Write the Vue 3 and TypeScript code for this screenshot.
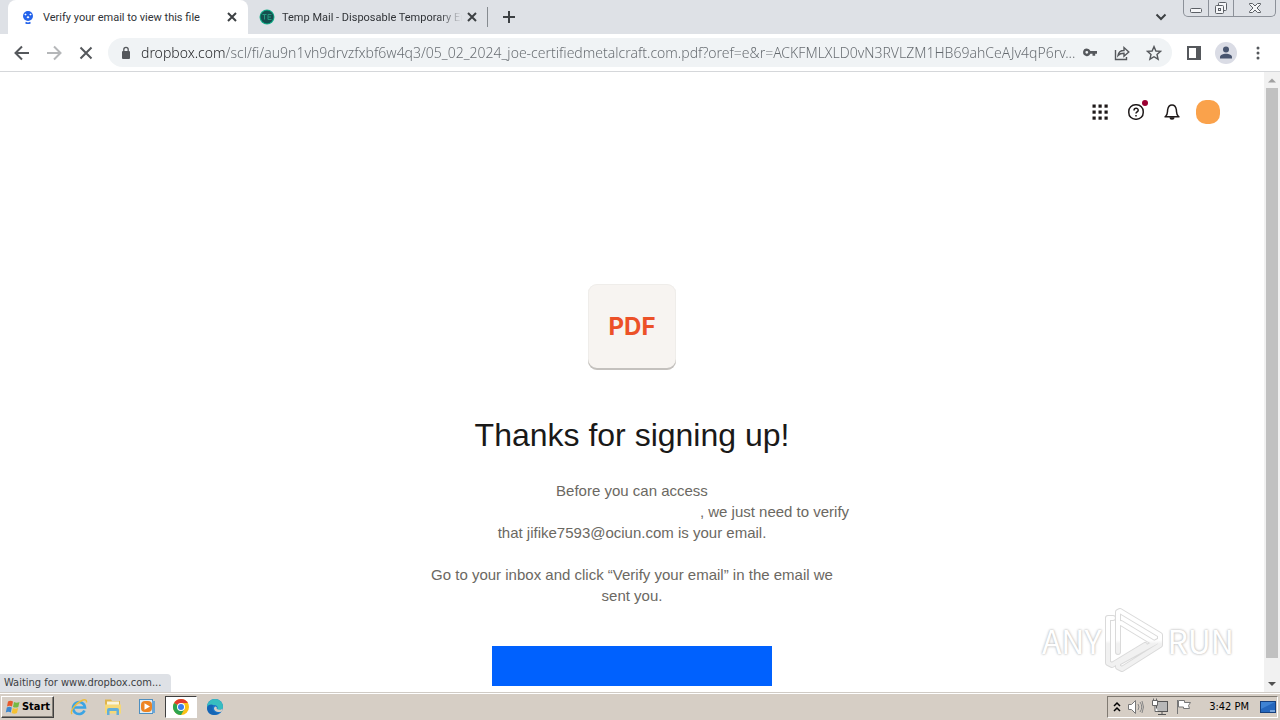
<script setup lang="ts">
import { ref } from 'vue'

const url = ref(
  'dropbox.com/scl/fi/au9n1vh9drvzfxbf6w4q3/05_02_2024_joe-certifiedmetalcraft.com.pdf?oref=e&r=ACKFMLXLD0vN3RVLZM1HB69ahCeAJv4qP6rv...'
)
const dots: number[] = [1, 7, 13]
</script>

<template>
  <div class="screen">
    <div class="tabstrip">
      <div class="tab active">
        <svg class="fav" viewBox="0 0 16 16" aria-hidden="true">
          <circle cx="8" cy="7" r="5" fill="#2463eb" />
          <path d="M5.500 4.500l1.200 1-1.200 1-1.200-1zM10.500 4.500l1.200 1-1.200 1-1.200-1zM8 7l1.500 1.200L8 9.500 6.500 8.200z" fill="#fff" />
          <path d="M5.500 13.500q2.500 1.500 5 0" fill="none" stroke="#2463eb" stroke-width="1.500" />
        </svg>
        <span class="title">Verify your email to view this file</span>
        <button class="close" aria-label="Close tab">
          <svg viewBox="0 0 10 10"><path d="M1 1l8 8M9 1L1 9" /></svg>
        </button>
      </div>
      <div class="tab">
        <svg class="fav" viewBox="0 0 16 16" aria-hidden="true">
          <circle cx="8" cy="8" r="7.500" fill="#12b08a" />
          <circle cx="8" cy="8" r="6.500" fill="#14504f" />
          <path d="M3.500 5.500h4M5.500 5.500v5M9 5.500h3.500M9 8h3M9 10.500h3.500M9 5.500v5" stroke="#279a80" fill="none" />
        </svg>
        <span class="title fade">Temp Mail - Disposable Temporary En</span>
        <button class="close" aria-label="Close tab">
          <svg viewBox="0 0 10 10"><path d="M1 1l8 8M9 1L1 9" /></svg>
        </button>
      </div>
      <i class="separator"></i>
      <button class="newtab" aria-label="New tab">
        <svg viewBox="0 0 12 12"><path d="M6 0v12M0 6h12" /></svg>
      </button>
      <button class="chevron" aria-label="Search tabs">
        <svg viewBox="0 0 12 8"><path d="M1.500 1.500L6 6l4.500-4.500" /></svg>
      </button>
      <div class="window-buttons">
        <button aria-label="Minimize">
          <svg width="14" height="14" viewBox="0 0 14 14"><rect x="1.500" y="7.500" width="11" height="4" rx="1" /></svg>
        </button>
        <button aria-label="Restore">
          <svg width="14" height="14" viewBox="0 0 14 14"><rect x="4.500" y="1.500" width="8" height="8" rx="1" /><rect x="1.500" y="4.500" width="8" height="8" rx="1" /><rect x="4.500" y="7.500" width="2" height="2" /></svg>
        </button>
        <button class="wide" aria-label="Close">
          <svg width="14" height="14" viewBox="0 0 14 14"><path d="M1.500 2.500h3L7 5l2.500-2.500h3v1L9 7l3.500 3.500v1h-3L7 9l-2.500 2.500h-3v-1L5 7 1.500 3.500z" /></svg>
        </button>
      </div>
    </div>

    <div class="toolbar">
      <button class="tool" aria-label="Back"><svg viewBox="0 0 16 16"><path d="M15 8H2M8 1.500L1.500 8 8 14.500" /></svg></button>
      <button class="tool dim" aria-label="Forward"><svg viewBox="0 0 16 16"><path d="M1 8h13M8 1.500L14.500 8 8 14.500" /></svg></button>
      <button class="tool" aria-label="Stop"><svg viewBox="0 0 16 16"><path d="M2.500 2.500l11 11M13.500 2.500l-11 11" /></svg></button>
      <div class="omnibox">
        <svg class="lock" viewBox="0 0 10 14" aria-hidden="true"><rect x="1" y="5" width="8" height="8" rx="1" fill="#55585c" /><path d="M2.800 5.500V3.600a2.200 2.200 0 0 1 4.400 0v1.900" fill="none" stroke="#55585c" stroke-width="1.300" /></svg>
        <input v-model="url" class="url" type="text" aria-label="Address" spellcheck="false" />
        <button class="tool" aria-label="Passwords">
          <svg viewBox="0 0 16 16"><path class="solid" fill-rule="evenodd" d="M4.800 3.500a3.800 3.800 0 1 0 3.600 5.200h2.100v2h2.700v-2H15V6.100H8.400A3.800 3.800 0 0 0 4.800 3.500zm0 2.400a1.400 1.400 0 1 1 0 2.800 1.400 1.400 0 0 1 0-2.800z" /></svg>
        </button>
        <button class="tool" aria-label="Share">
          <svg class="thin" viewBox="0 0 16 16"><path d="M1.500 5v9.500h11V12M4 10.500c.5-3.500 2.500-5 6-5V2.500L14.800 7 10 11.200V8.300c-2.800 0-4.500.5-6 2.200z" /></svg>
        </button>
        <button class="tool" aria-label="Bookmark">
          <svg class="thin" viewBox="0 0 16 16"><path d="M8 1.600l1.900 4.400 4.700.4-3.600 3.100 1.100 4.700L8 11.700l-4.100 2.500L5 9.500 1.400 6.400 6.100 6z" /></svg>
        </button>
      </div>
      <button class="tool" aria-label="Side panel"><svg viewBox="0 0 16 16"><rect x="2" y="2" width="12" height="12" /><path class="solid" d="M10 2h4v12h-4z" /></svg></button>
      <button class="tool profile" aria-label="Profile"><svg viewBox="0 0 22 22"><circle cx="11" cy="11" r="11" fill="#dadce5" /><circle cx="11" cy="7.500" r="3" fill="#48556f" /><path d="M5 16.500v-1.300c0-2.200 3-3.400 6-3.400s6 1.200 6 3.400v1.300z" fill="#48556f" /></svg></button>
      <button class="tool" aria-label="Menu"><svg viewBox="0 0 16 16"><circle class="solid" cx="8" cy="3" r="1.500" /><circle class="solid" cx="8" cy="8" r="1.500" /><circle class="solid" cx="8" cy="13" r="1.500" /></svg></button>
    </div>

    <div class="viewport">
      <main class="page">
        <nav class="page-nav">
          <button aria-label="Apps">
            <svg viewBox="0 0 16 16">
              <template v-for="y in dots" :key="y">
                <rect v-for="x in dots" :key="x" :x="x - 0.5" :y="y - 0.5" width="3.2" height="3.2" fill="#1e1919" />
              </template>
            </svg>
          </button>
          <button aria-label="Help">
            <svg viewBox="0 0 16 16" class="line"><rect x="0.800" y="0.800" width="14.400" height="14.400" rx="6.500" /><path d="M6 6.500C6 3.500 10.200 3.700 10.200 6.200 10.200 7.800 8 7.800 8 9.500M8 11v1.500" /></svg>
            <i class="badge"></i>
          </button>
          <button aria-label="Notifications">
            <svg viewBox="0 0 16 16" class="line"><path d="M0.500 12.700h15M1.500 12.500C4 10.500 3.200 8.500 3.700 5.500 4.200 2.500 5.800 1 8 1s3.800 1.500 4.300 4.500c.5 3-.3 5 2.200 7" /><path d="M5.500 13.300a2.500 2.500 0 0 0 5 0z" fill="#1e1919" stroke="none" /></svg>
          </button>
          <button aria-label="Account" class="account"></button>
        </nav>
        <section class="message">
          <div class="file">PDF</div>
          <h1>Thanks for signing up!</h1>
          <p>Before you can access<br /><span class="filename"></span>, we just need to verify<br />that jifike7593@ociun.com is your email.</p>
          <p>Go to your inbox and click “Verify your email” in the email we<br />sent you.</p>
          <button class="primary" aria-label="Verify email"></button>
        </section>
      </main>
      <div class="scrollbar" aria-hidden="true">
        <svg viewBox="0 0 16 16"><path d="M4 10.500l4-4 4 4z" fill="#a0a0a0" /></svg>
        <i class="thumb"></i>
        <svg class="end" viewBox="0 0 16 16"><path d="M4 6l4 4 4-4z" fill="#505050" /></svg>
      </div>
      <div class="status">Waiting for www.dropbox.com...</div>
      <div class="watermark">
        <span>ANY</span>
        <svg viewBox="0 0 60 64" aria-hidden="true">
          <defs>
            <linearGradient id="mark" x1="0" y1="0" x2="0" y2="64" gradientUnits="userSpaceOnUse">
              <stop offset="0.500" stop-color="#fff" />
              <stop offset="0.560" stop-color="#f1f1f1" />
            </linearGradient>
          </defs>
          <g fill="none" stroke-linejoin="round" stroke-linecap="round">
            <path d="M9 10H4v45l4 2 33-20M14 44V4l2-1 40 24v5M17 15l33 20M14 55v4l4 2 38-24v-5L14 55" stroke="#dadada" stroke-width="6" />
            <path d="M9 10H4v45l4 2 33-20M14 44V4l2-1 40 24v5M17 15l33 20M14 55v4l4 2 38-24v-5L14 55" stroke="url(#mark)" stroke-width="4" />
          </g>
        </svg>
        <span>RUN</span>
      </div>
    </div>

    <footer class="taskbar">
      <button class="start">
        <svg viewBox="0 0 16 16" aria-hidden="true"><path d="M3 2.500q2.500-1.500 5 0L7 7.500q-2.500-1.500-5 0z" fill="#e7592b" /><path d="M9 3q2.500 1.300 5.500 0l-1.200 5q-2.600 1.200-5.300 0z" fill="#75b943" /><path d="M1.800 8.500q2.500-1.500 5 0l-1 5q-2.500-1.500-5 0z" fill="#3d88cf" /><path d="M7.800 9q2.500 1.300 5.300 0L12 14q-2.600 1.300-5.300 0z" fill="#f5c132" /></svg>
        Start
      </button>
      <div class="launchers">
        <button aria-label="Internet Explorer">
          <svg viewBox="0 0 18 18"><path d="M14.500 12.500A6 6 0 1 1 15 9.500H4.500" fill="none" stroke="#3ba4e4" stroke-width="2.600" /><path d="M2 16C-.5 13 6 4.500 13 2q4-1 3.500 2.500" fill="none" stroke="#edbd3d" stroke-width="1.400" /></svg>
        </button>
        <button aria-label="File Explorer">
          <svg viewBox="0 0 18 18"><path d="M1 1.500h6l1 1.500h8v12H1z" fill="#dfb54d" /><path d="M3 3.500h12v4H3z" fill="#f9f4dc" /><path d="M1 6.500h16v9H1z" fill="#f5d878" /><path d="M3 17v-5q0-2 2-2h8q2 0 2 2v5h-2.500v-4h-7v4z" fill="#62aeda" /></svg>
        </button>
        <button aria-label="Media Player">
          <svg viewBox="0 0 18 18"><rect x="1.500" y="1.500" width="13" height="14" fill="#deedf8" stroke="#4e8fc0" /><path d="M14 3h3v12h-3" fill="#6ba6d6" /><rect x="3" y="3" width="11" height="11" rx="4" fill="#ed8423" /><path d="M6.500 5.200v6.600l5.500-3.300z" fill="#fff" /></svg>
        </button>
        <button aria-label="Chrome" class="pressed">
          <svg viewBox="0 0 18 18"><circle cx="9" cy="9" r="8" fill="#fbc116" /><path d="M9 9L2.070 5A8 8 0 0 1 15.930 5H9z" fill="#e33b2e" /><path d="M9 9l-6.930-4A8 8 0 0 0 9 17l3.500-6z" fill="#2da44f" /><circle cx="9" cy="9" r="4" fill="#fff" /><circle cx="9" cy="9" r="3" fill="#3b7ded" /></svg>
        </button>
        <button aria-label="Edge">
          <svg viewBox="0 0 18 18"><circle cx="9" cy="9" r="8" fill="#1976cb" /><path d="M1 9a8 8 0 0 1 16 0c0 3-3.500 3.500-6 2.500 2-3-1-5-4-4.500C4 7.300 1.500 8 1 10z" fill="#37bdc0" /><path d="M1 10C1.500 6.500 5.500 6 7.500 7.200 5 10 7 15 13 14.800 9 19 1 17 1 10z" fill="#1565b5" /><path d="M9 8.500c1.600 0 2.300 1 1.600 2.300 1.800 1.300 5 1.200 6.300-.6l-1 3c-3 2-8 .5-7.900-3.200z" fill="#d6cfc7" /></svg>
        </button>
      </div>
      <div class="tray">
        <svg class="small" viewBox="0 0 8 12" aria-hidden="true"><path d="M1 5l3-3 3 3M1 10l3-3 3 3" fill="none" stroke="#000" stroke-width="1.500" /></svg>
        <svg viewBox="0 0 18 18" aria-hidden="true"><path d="M1.500 6.500h3l4-4v13l-4-4h-3z" fill="#fff" stroke="#777" /><path d="M11 6q2 3 0 6M13 4q3.500 5 0 10M15 3q3 6 0 12" fill="none" stroke="#858585" /></svg>
        <svg viewBox="0 0 18 18" aria-hidden="true"><rect x="5.500" y="3.500" width="11" height="10" fill="#b8b8b8" stroke="#555" /><path d="M7 16.500h8M11 14v2" stroke="#555" /><path d="M1.500 2.500h5v5h-5zM4 7.500v6h3M2.500 0.500v2M5.500 0.500v2" fill="#fff" stroke="#666" /></svg>
        <svg viewBox="0 0 18 18" aria-hidden="true"><path d="M2.500 2v14" stroke="#777" stroke-width="1" /><path d="M3.500 2.500h6v2h6l-2 3 1 3h-6v-1.500h-5z" fill="#fff" stroke="#777" /></svg>
        <time>3:42 PM</time>
        <svg viewBox="0 0 18 18" aria-hidden="true"><rect x="1.500" y="3.500" width="15" height="11" fill="#2567bd" stroke="#153f7d" /><path d="M2 4h14L2 11z" fill="#3f83d3" /><path d="M11 13h5" stroke="#cfe4fa" /></svg>
      </div>
    </footer>
  </div>
</template>

<style>
body {
  margin: 0;
}
</style>

<style scoped>
* {
  box-sizing: border-box;
}
.screen {
  height: 100vh;
  display: flex;
  flex-direction: column;
  overflow: hidden;
  background: #fff;
  font-family: "DejaVu Sans Condensed", "Noto Sans", sans-serif;
}
button {
  display: flex;
  align-items: center;
  justify-content: center;
  flex: none;
  padding: 0;
  border: 0;
  background: none;
  font: inherit;
}
svg {
  display: block;
  flex: none;
}
.tabstrip {
  display: flex;
  flex: none;
  height: 34px;
  padding-left: 8px;
  background: #dee1e6;
}
.tab {
  display: flex;
  align-items: center;
  width: 239px;
  padding: 0 10px 0 11px;
  border-radius: 8px 8px 0 0;
  font-family: Roboto, sans-serif;
  font-size: 11px;
  color: #303337;
}
.tab.active {
  width: 240px;
  padding-left: 12px;
  background: #fff;
}
.fav {
  width: 16px;
  height: 16px;
}
.title {
  margin-left: 7px;
  white-space: nowrap;
}
.fade {
  mask-image: linear-gradient(to right, #000 85%, transparent 98%);
}
.close {
  width: 12px;
  height: 16px;
  margin-left: auto;
}
.close svg {
  width: 10px;
  height: 10px;
}
.close path,
.newtab path,
.chevron path {
  fill: none;
  stroke: #3c4043;
  stroke-width: 2;
}
.separator {
  width: 1px;
  height: 20px;
  margin-top: 7px;
  background: #868b90;
}
.newtab {
  width: 42px;
}
.newtab svg {
  width: 12px;
  height: 12px;
}
.chevron {
  width: 28px;
  margin-left: auto;
}
.chevron svg {
  width: 12px;
  height: 8px;
}
.window-buttons {
  display: flex;
  height: 17px;
  margin: 0 4px 0 8px;
  border: 1px solid #8c9199;
  border-top: 0;
  border-radius: 0 0 5px 5px;
}
.window-buttons button {
  width: 25px;
  border-right: 1px solid #8c9199;
}
.window-buttons .wide {
  width: 41px;
  border: 0;
}
.window-buttons svg * {
  fill: #f5f6f8;
  stroke: #5c6066;
}
.toolbar {
  display: flex;
  align-items: center;
  flex: none;
  gap: 4px;
  height: 38px;
  padding: 0 8px;
  border-bottom: 1px solid #d5d7da;
}
.tool {
  width: 28px;
  height: 28px;
}
.tool svg {
  width: 16px;
  height: 16px;
  fill: none;
  stroke: #55585c;
  stroke-width: 2;
}
.tool svg.thin {
  stroke-width: 1.4;
}
.tool.dim svg {
  stroke: #b5b7b9;
}
.tool .solid {
  fill: #55585c;
  stroke: none;
}
.tool.profile svg {
  width: 22px;
  height: 22px;
  stroke: none;
}
.omnibox {
  display: flex;
  align-items: center;
  flex: 1;
  min-width: 0;
  gap: 4px;
  height: 29px;
  margin: 0 4px;
  padding: 0 4px 0 13px;
  border-radius: 15px;
  background: #f0f3f5;
}
.lock {
  width: 10px;
  height: 14px;
}
.url {
  flex: 1;
  min-width: 0;
  margin: 0 -6px 0 6px;
  padding: 0;
  border: 0;
  outline: 0;
  font-family: "Noto Sans", sans-serif;
  font-size: 14px;
  font-weight: 300;
  line-height: 24px;
  color: transparent;
  background: linear-gradient(to right, #202124 84px, #63686d 84px);
  background-clip: text;
}
.viewport {
  position: relative;
  display: flex;
  flex: 1;
  min-height: 0;
}
.page {
  flex: 1;
  min-width: 0;
  overflow: hidden;
  padding-top: 28px;
}
.page-nav {
  display: flex;
  justify-content: flex-end;
  gap: 12px;
  padding-right: 44px;
}
.page-nav button {
  position: relative;
  width: 24px;
  height: 24px;
}
.page-nav svg {
  width: 16px;
  height: 16px;
}
.page-nav .line {
  fill: none;
  stroke: #1e1919;
  stroke-width: 1.5;
}
.badge {
  position: absolute;
  top: 0;
  right: 0;
  width: 6px;
  height: 6px;
  border-radius: 50%;
  background: #9b0032;
}
.page-nav .account {
  border-radius: 10px;
  background: #faa24b;
}
.message {
  display: flex;
  flex-direction: column;
  align-items: center;
  margin-top: 160px;
  font-family: "Liberation Sans", Arial, sans-serif;
  text-align: center;
}
.file {
  display: flex;
  align-items: center;
  justify-content: center;
  width: 88px;
  height: 86px;
  border-radius: 9px;
  background: #f7f4f1;
  box-shadow: inset 0 -2px #c4c1be, inset 0 0 0 1px #efedea;
  color: #ec5128;
  font: 700 24px/30px Inter, sans-serif;
}
h1 {
  margin: 45px 0 25px;
  color: #1a1918;
  font-size: 32px;
  font-weight: 400;
  line-height: 40px;
}
p {
  margin: 0 0 21px;
  color: #6b6862;
  font-size: 15px;
  line-height: 21px;
  white-space: nowrap;
}
.filename {
  display: inline-block;
  width: 285px;
}
.primary {
  width: 280px;
  height: 40px;
  margin-top: 19px;
  background: #0061fe;
}
.scrollbar {
  display: flex;
  flex-direction: column;
  width: 16px;
  background: #f1f1f1;
}
.scrollbar svg {
  width: 16px;
  height: 16px;
}
.thumb {
  height: 92%;
  margin: 0 2px;
  background: #c1c1c1;
}
.scrollbar .end {
  margin-top: auto;
}
.status {
  position: absolute;
  left: 0;
  bottom: 0;
  padding: 0 10px 0 4px;
  border-radius: 0 4px 0 0;
  background: #dee1e6;
  color: #3c4043;
  font-size: 11px;
  line-height: 18px;
}
.watermark {
  position: absolute;
  right: 46px;
  bottom: 20px;
  display: flex;
  align-items: center;
  gap: 3px;
  color: #fff;
  font: 400 32px/64px "Noto Sans CJK JP", sans-serif;
  text-shadow: 0 0 2px #bbb, 0 0 3px #ccc;
}
.watermark svg {
  width: 60px;
  height: 64px;
}
.taskbar {
  display: flex;
  align-items: center;
  flex: none;
  height: 28px;
  padding: 0 2px 0 1px;
  border-top: 1px solid #d0cbc5;
  box-shadow: inset 0 1px #fff;
  background: #d6cec5;
}
.start {
  gap: 1px;
  width: 53px;
  height: 22px;
  border: 1px solid;
  border-color: #fff #404040 #404040 #fff;
  box-shadow: inset -1px -1px #858078;
  color: #000;
  font-size: 11px;
  font-weight: 700;
}
.start svg {
  width: 16px;
  height: 16px;
}
.launchers {
  display: flex;
  gap: 2px;
  margin-left: 9px;
}
.launchers button {
  width: 32px;
  height: 22px;
}
.launchers svg {
  width: 18px;
  height: 18px;
}
.launchers .pressed {
  border: 1px solid;
  border-color: #404040 #fff #fff #404040;
  background: #fff;
}
.tray {
  display: flex;
  align-items: center;
  gap: 6px;
  height: 22px;
  margin-left: auto;
  padding: 0 0 0 5px;
  border: 1px solid;
  border-color: #807a72 #fff #fff #807a72;
  color: #000;
  font-size: 11px;
}
.tray svg {
  width: 18px;
  height: 18px;
}
.tray .small {
  width: 8px;
  height: 12px;
}
.tray time {
  margin: 0 4px 0 10px;
}
</style>
